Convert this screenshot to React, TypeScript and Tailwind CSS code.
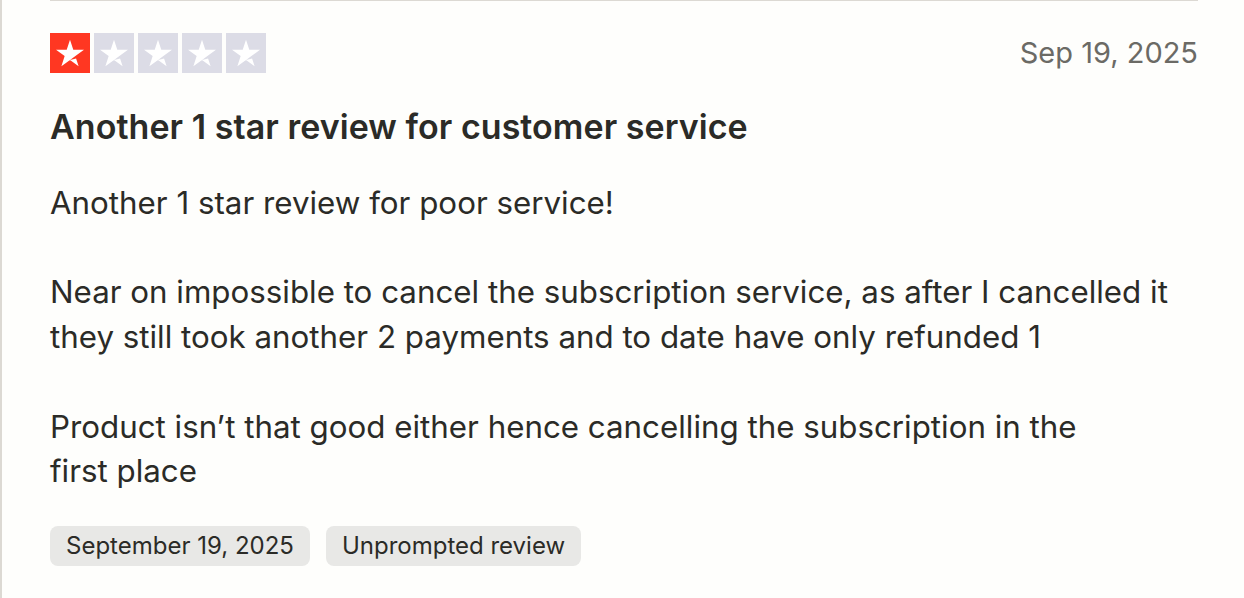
import React from 'react';

const STAR_PATH =
  'M48 64.7L62.6 61l6.1 18.8zm33.6-24.3H55.9L48 16.2l-7.9 24.2H14.4l20.8 15-7.9 24.2 20.8-15 12.8-9.2 20.7-15z';

const Star: React.FC<{ filled: boolean }> = ({ filled }) => (
  <svg viewBox="0 0 96 96" className="h-10 w-10 block">
    <path fill={filled ? '#ff3722' : '#dcdce6'} d="M0 0h96v96H0z" />
    <path fill="#ffffff" d={STAR_PATH} />
  </svg>
);

const body = `Another 1 star review for poor service!

Near on impossible to cancel the subscription service, as after I cancelled it
they still took another 2 payments and to date have only refunded 1

Product isn’t that good either hence cancelling the subscription in the
first place`;

const App: React.FC = () => {
  return (
    <div
      className="min-h-[598px] w-[1244px] bg-[#fefefc] border-l-2 border-[#dcd9d3] pl-12 pr-[46px]"
      style={{ fontFamily: 'Inter, "Noto Sans", sans-serif' }}
    >
      <article className="border-t border-[#dcd9d3] pt-[32px] text-[#2b2b27]">
        <div className="flex items-center justify-between">
          <div className="flex gap-1">
            {Array.from({ length: 5 }).map((_, i) => (
              <Star key={i} filled={i < 1} />
            ))}
          </div>
          <span className="text-[29px] text-[#6b6a65] leading-10">Sep 19, 2025</span>
        </div>

        <h2 className="mt-[34px] text-[34px] leading-[40px] font-semibold tracking-[0.05px]">
          Another 1 star review for customer service
        </h2>

        <p className="mt-[34px] whitespace-pre-line text-[31.3px] leading-[44.7px]">
          {body}
        </p>

        <div className="mt-[32px] flex gap-4">
          <span className="rounded-lg bg-[#e8e8e6] px-4 h-10 flex items-center text-[24px]">
            September 19, 2025
          </span>
          <span className="rounded-lg bg-[#e8e8e6] px-4 h-10 flex items-center text-[24px]">
            Unprompted review
          </span>
        </div>
      </article>
    </div>
  );
};

export default App;
